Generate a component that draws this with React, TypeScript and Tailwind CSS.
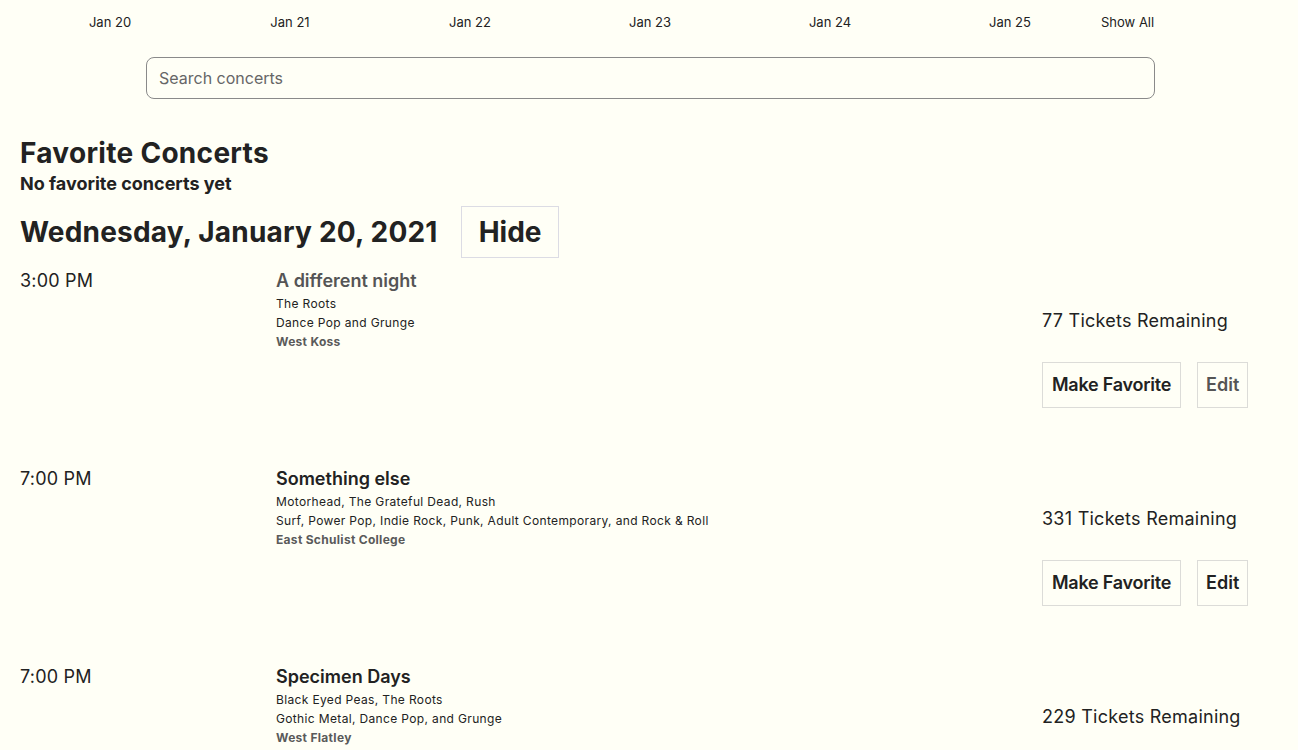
import React from 'react';

const DAYS = ['Jan 20', 'Jan 21', 'Jan 22', 'Jan 23', 'Jan 24', 'Jan 25'];

interface Concert {
  time: string;
  title: string;
  artists: string;
  genres: string;
  venue: string;
  tickets: number;
  dim?: boolean;
}

const CONCERTS: Concert[] = [
  {
    time: '3:00 PM',
    title: 'A different night',
    artists: 'The Roots',
    genres: 'Dance Pop and Grunge',
    venue: 'West Koss',
    tickets: 77,
    dim: true,
  },
  {
    time: '7:00 PM',
    title: 'Something else',
    artists: 'Motorhead, The Grateful Dead, Rush',
    genres: 'Surf, Power Pop, Indie Rock, Punk, Adult Contemporary, and Rock & Roll',
    venue: 'East Schulist College',
    tickets: 331,
  },
  {
    time: '7:00 PM',
    title: 'Specimen Days',
    artists: 'Black Eyed Peas, The Roots',
    genres: 'Gothic Metal, Dance Pop, and Grunge',
    venue: 'West Flatley',
    tickets: 229,
  },
];

function ConcertRow({ c }: { c: Concert }) {
  return (
    <div className="flex h-[198px] px-5">
      <div className="w-[256px] shrink-0 text-lg leading-6 tracking-[0.2px]">{c.time}</div>
      <div className="flex-1">
        <div className={`text-lg leading-6 font-semibold ${c.dim ? 'text-[#555555]' : ''}`}>{c.title}</div>
        <div className="mt-px text-xs leading-[19px] tracking-[0.35px]">{c.artists}</div>
        <div className="text-xs leading-[19px] tracking-[0.35px]">{c.genres}</div>
        <div className="text-xs leading-[19px] tracking-[0.3px] font-bold text-[#5a5a5a]">{c.venue}</div>
      </div>
      <div className="w-[236px] shrink-0 pt-10">
        <div className="text-lg leading-6 tracking-[0.25px]">{c.tickets} Tickets Remaining</div>
        <div className="mt-[29px] flex gap-4">
          <button className="h-[46px] px-[9px] border border-[#dcdcd8] text-lg font-semibold tracking-[-0.25px]">
            Make Favorite
          </button>
          <button
            className={`h-[46px] px-[8px] border border-[#dcdcd8] text-lg font-semibold ${c.dim ? 'text-[#555555]' : ''}`}
          >
            Edit
          </button>
        </div>
      </div>
    </div>
  );
}

export default function App() {
  return (
    <div
      className="h-[750px] bg-[#fffff6] text-[#222222] overflow-hidden"
      style={{ fontFamily: 'Inter, "Noto Sans", sans-serif' }}
    >
      {/* Day nav */}
      <div className="flex h-[46px] items-center px-5 text-[13px]">
        {DAYS.map((d) => (
          <div key={d} className="w-[180px] text-center">
            {d}
          </div>
        ))}
        <div className="pl-px">Show All</div>
      </div>

      <div className="mt-[11px] ml-[146px] w-[1009px]">
        <input
          type="text"
          placeholder="Search concerts"
          className="w-full h-[42px] rounded-lg border border-[#8a8a8a] bg-transparent px-[12px] text-base placeholder-[#666666] outline-none"
        />
      </div>

      <div className="mt-9 px-5">
        <h1 className="text-[28px] leading-9 font-bold tracking-[0.3px]">Favorite Concerts</h1>
        <div className="mt-px text-lg leading-6 font-bold">No favorite concerts yet</div>
        <div className="mt-[10px] flex items-center gap-[23px]">
          <h2 className="text-[28px] leading-10 font-bold tracking-[0.2px]">Wednesday, January 20, 2021</h2>
          <button className="h-[52px] px-[17px] border border-[#dcdce4] text-[28px] font-bold">Hide</button>
        </div>
      </div>

      <div className="mt-[11px]">
        {CONCERTS.map((c, i) => (
          <ConcertRow key={i} c={c} />
        ))}
      </div>
    </div>
  );
}
